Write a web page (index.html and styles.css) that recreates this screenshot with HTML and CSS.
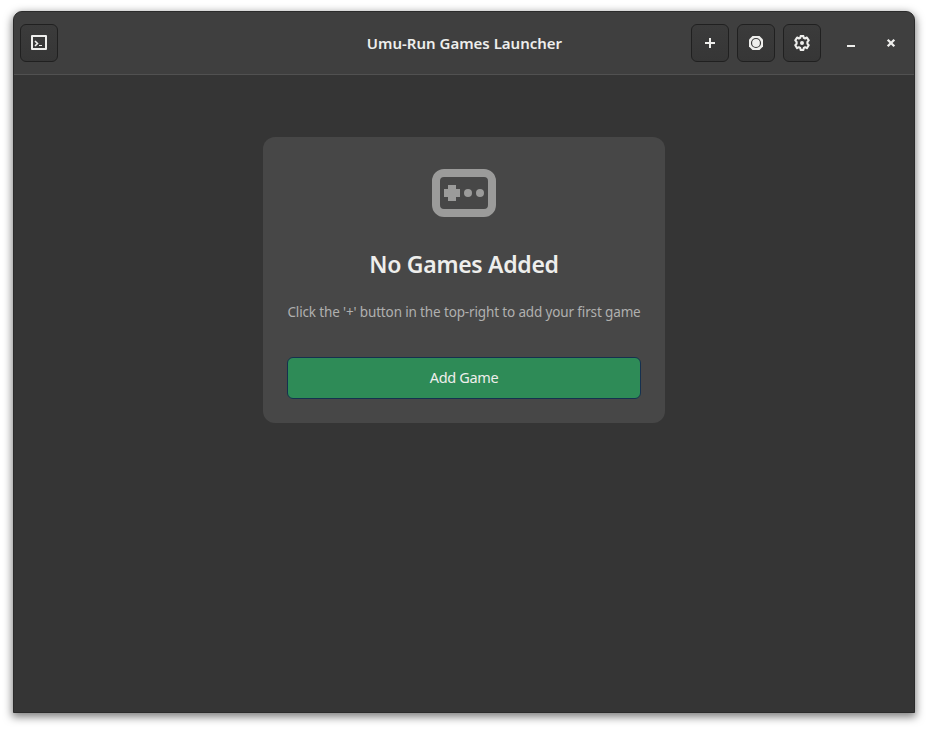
FILE: index.html
```html
<!DOCTYPE html>
<html lang="en">
<head>
<meta charset="utf-8">
<title>Umu-Run Games Launcher</title>
<link rel="stylesheet" href="styles.css">
</head>
<body>
<div class="window">
  <header class="headerbar">
    <div class="start">
      <button class="tool"><svg viewBox="0 0 16 16"><path fill-rule="evenodd" d="M1 0h14q1 0 1 1v13q0 1-1 1H1q-1 0-1-1V1q0-1 1-1zM2 2v11h12V2z"/><path d="M4 6l2.500 2.500L4 11" fill="none" stroke="currentColor" stroke-width="1.600"/><path d="M8 10h3v1H8z"/></svg></button>
    </div>
    <h1 class="title"><span>Umu-Run Games Launcher</span></h1>
    <div class="end">
      <button class="tool"><svg viewBox="0 0 16 16"><path d="M7 3h2v4h4v2H9v4H7V9H3V7h4z"/></svg></button>
      <button class="tool"><svg viewBox="0 0 16 16"><path d="M4.500 1h7L15 4.500v7L11.500 15h-7L1 11.500v-7z"/><circle cx="8" cy="8" r="4.500" fill="none" stroke="#393939" stroke-width="1.200"/></svg></button>
      <button class="tool"><svg viewBox="0 0 16 16"><path d="M6.700 1h2.600l.5 1.900 1.300.6 1.800-1 1.800 2.900-1.300 1.500v1.900l1.300 1.500-1.800 2.900-1.800-1-1.300.7L9.300 15H6.700l-.5-2.100-1.300-.7-1.800 1-1.800-2.900 1.300-1.500V6.900L1.300 5.400l1.800-2.900 1.800 1 1.300-.6z" fill="none" stroke="currentColor" stroke-width="2.100" stroke-linejoin="round"/><circle cx="8" cy="8" r="2"/></svg></button>
      <button class="control minimize"><svg viewBox="0 0 16 16"><path d="M4 10h8v2H4z"/></svg></button>
      <button class="control close"><svg viewBox="0 0 16 16"><path d="M4.700 4.700l6.600 6.600M11.300 4.700l-6.600 6.600" fill="none" stroke="currentColor" stroke-width="2.300"/></svg></button>
    </div>
  </header>
  <main class="content">
    <section class="card">
      <svg class="gamepad" viewBox="0 0 16 16"><path fill-rule="evenodd" d="M3 2h10a3 3 0 0 1 3 3v6a3 3 0 0 1-3 3H3a3 3 0 0 1-3-3V5a3 3 0 0 1 3-3zM3 4a1 1 0 0 0-1 1v6a1 1 0 0 0 1 1h10a1 1 0 0 0 1-1V5a1 1 0 0 0-1-1z"/><path d="M4 6h2v1h1v2H6v1H4V9H3V7h1z"/><circle cx="9" cy="8" r="1"/><circle cx="12" cy="8" r="1"/></svg>
      <h2 class="heading"><span>No Games Added</span></h2>
      <p class="hint"><span>Click the '+' button in the top-right to add your first game</span></p>
      <button class="add"><span>Add Game</span></button>
    </section>
  </main>
</div>
</body>
</html>
```
FILE: styles.css
```css
* { box-sizing: border-box; }
body {
  margin: 0;
  height: 729px;
  padding: 11px 13px 16px;
  overflow: hidden;
  background: #fff;
  color: #eeeeec;
  font-family: "Noto Sans", sans-serif;
}
.window {
  height: 702px;
  display: flex;
  flex-direction: column;
  background: #353535;
  border: 1px solid #2b2b2b;
  border-radius: 9px 9px 0 0;
  box-shadow: 0 3px 9px 1px rgba(0, 0, 0, .5);
}
.headerbar {
  height: 63px;
  flex: none;
  display: grid;
  grid-template-columns: 1fr auto 1fr;
  align-items: center;
  padding: 0 6px;
  background: #3f3f3f;
  border-bottom: 1px solid #515151;
  border-radius: 8px 8px 0 0;
}
.start, .end { display: flex; align-items: center; }
.end { justify-content: flex-end; gap: 8px; padding-right: 1px; }
button {
  padding: 0;
  border: 0;
  color: inherit;
  font: inherit;
  background: none;
}
svg { display: block; fill: currentColor; }
.tool, .control {
  display: flex;
  align-items: center;
  justify-content: center;
}
.tool {
  width: 38px;
  height: 38px;
  border: 1px solid #202020;
  border-radius: 6px;
  background: linear-gradient(#3b3b3b, #363636);
}
.tool svg, .control svg { width: 16px; height: 16px; }
.control { width: 32px; height: 38px; }
.control.minimize { margin-left: 6px; }
.title {
  margin: 0;
  padding-left: 1px;
  font-size: 15px;
  line-height: 22px;
  font-weight: 600;
  white-space: nowrap;
}
.content { display: flex; justify-content: center; padding-top: 62px; }
.card {
  width: 402px;
  height: 286px;
  padding: 24px;
  display: flex;
  flex-direction: column;
  align-items: center;
  background: #474747;
  border-radius: 12px;
}
.gamepad { width: 64px; height: 64px; color: #9b9b9a; }
.heading {
  margin: 23px 0 0;
  font-size: 23px;
  line-height: 32px;
  font-weight: 650;
  letter-spacing: -.3px;
  white-space: nowrap;
}
.hint {
  margin: 20px 0 0;
  color: #b0b0af;
  font-size: 13.5px;
  line-height: 24px;
  letter-spacing: -.14px;
  white-space: nowrap;
}
.add {
  width: 100%;
  height: 42px;
  margin-top: 33px;
  padding-bottom: 2px;
  border: 1px solid #15304f;
  border-radius: 6px;
  background: #2e8b57;
  font-size: 14.5px;
  letter-spacing: -.35px;
}
```
